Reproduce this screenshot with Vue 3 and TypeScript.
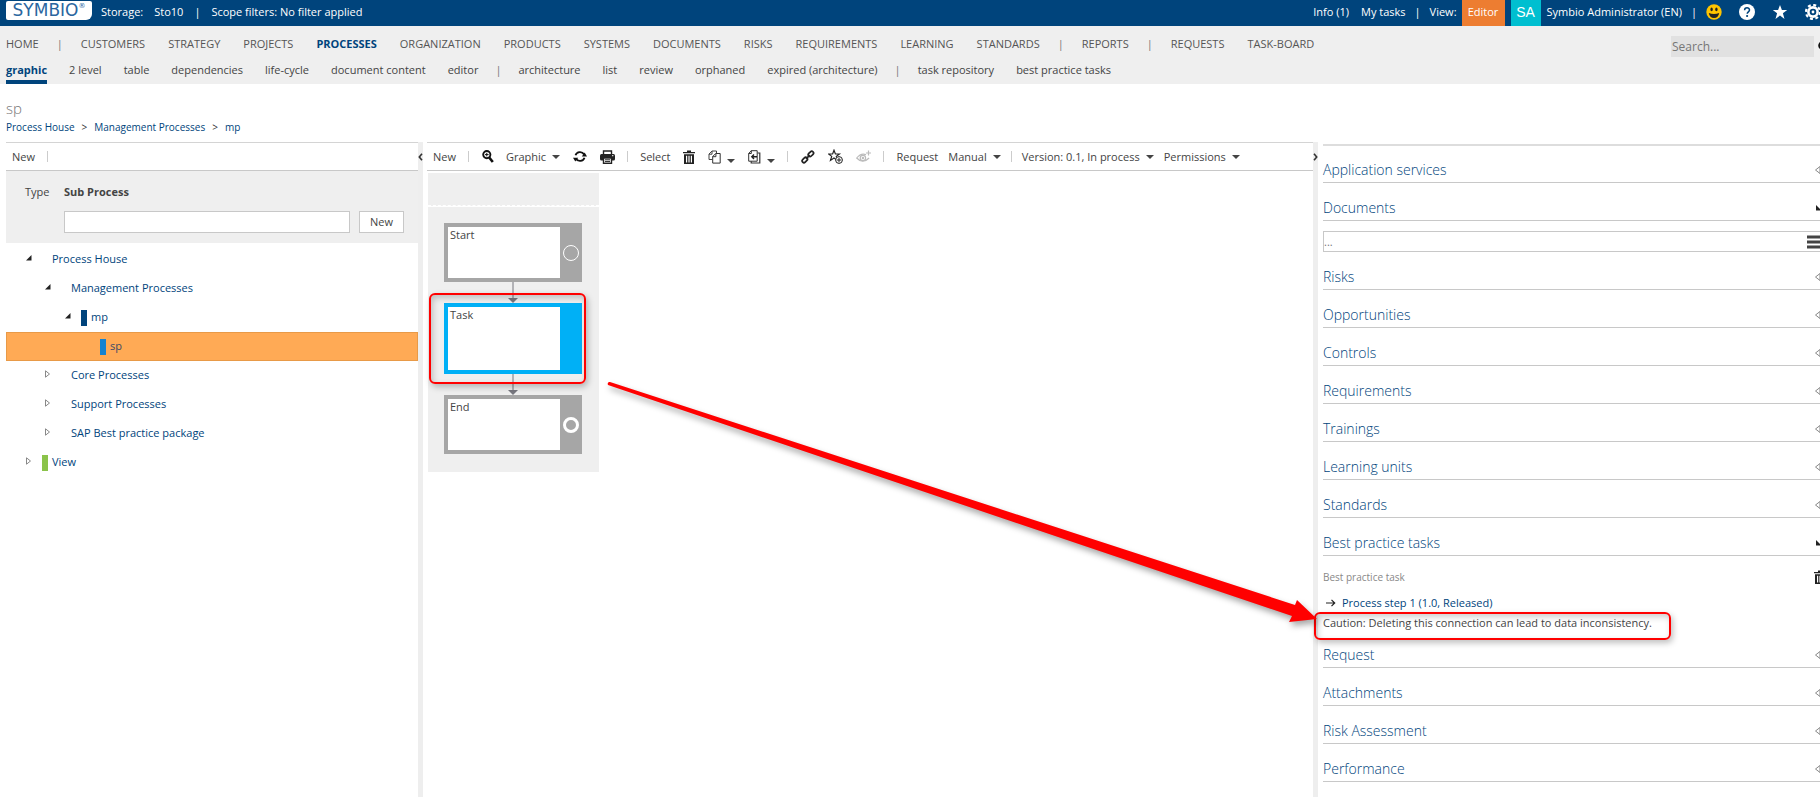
<script setup lang="ts">
import { ref } from 'vue'

interface NavItem { label: string; active?: boolean; divider?: boolean }
interface TreeItem { label: string; level: number; state: 'open' | 'closed' | 'leaf'; color?: string; selected?: boolean }
interface FlowNode { label: string; kind: 'start' | 'task' | 'end' }
interface Section { label: string; open?: 'documents' | 'tasks' }

const divider: NavItem = { label: '|', divider: true }
const names = (...labels: string[]): NavItem[] => labels.map((label) => ({ label }))

const mainNav: NavItem[] = [
  ...names('HOME'), divider,
  ...names('CUSTOMERS', 'STRATEGY', 'PROJECTS'),
  { label: 'PROCESSES', active: true },
  ...names('ORGANIZATION', 'PRODUCTS', 'SYSTEMS', 'DOCUMENTS', 'RISKS', 'REQUIREMENTS', 'LEARNING', 'STANDARDS'), divider,
  ...names('REPORTS'), divider,
  ...names('REQUESTS', 'TASK-BOARD'),
]
const subNav: NavItem[] = [
  { label: 'graphic', active: true },
  ...names('2 level', 'table', 'dependencies', 'life-cycle', 'document content', 'editor'), divider,
  ...names('architecture', 'list', 'review', 'orphaned', 'expired (architecture)'), divider,
  ...names('task repository', 'best practice tasks'),
]
const tree: TreeItem[] = [
  { label: 'Process House', level: 0, state: 'open' },
  { label: 'Management Processes', level: 1, state: 'open' },
  { label: 'mp', level: 2, state: 'open', color: 'navy' },
  { label: 'sp', level: 3, state: 'leaf', color: 'blue', selected: true },
  { label: 'Core Processes', level: 1, state: 'closed' },
  { label: 'Support Processes', level: 1, state: 'closed' },
  { label: 'SAP Best practice package', level: 1, state: 'closed' },
  { label: 'View', level: 0, state: 'closed', color: 'green' },
]
const nodes: FlowNode[] = [
  { label: 'Start', kind: 'start' },
  { label: 'Task', kind: 'task' },
  { label: 'End', kind: 'end' },
]
const sections: Section[] = [
  { label: 'Application services' },
  { label: 'Documents', open: 'documents' },
  { label: 'Risks' }, { label: 'Opportunities' }, { label: 'Controls' }, { label: 'Requirements' },
  { label: 'Trainings' }, { label: 'Learning units' }, { label: 'Standards' },
  { label: 'Best practice tasks', open: 'tasks' },
  { label: 'Request' }, { label: 'Attachments' }, { label: 'Risk Assessment' }, { label: 'Performance' },
]
const search = ref('')
const newName = ref('')
const documentName = ref('')
</script>

<template>
  <div class="app">
    <header class="topbar">
      <a href="#" class="logo">SYMBIO<sup>®</sup></a>
      <div class="context">
        <span>Storage:</span><a href="#">Sto10</a><span>|</span><a href="#">Scope filters: No filter applied</a>
      </div>
      <div class="account">
        <a href="#">Info (1)</a><a href="#">My tasks</a><span class="sep">|</span>
        <span class="view">View:<button type="button" class="editor">Editor</button></span>
        <span class="avatar">SA</span>
        <a href="#" class="user">Symbio Administrator (EN)</a><span class="sep">|</span>
        <span class="top-icons">
          <button type="button" aria-label="Feedback">
            <svg width="16" height="16" viewBox="0 0 16 16"><circle cx="8" cy="8" r="7.7" fill="#ffc400" /><ellipse cx="5.6" cy="5.4" rx="1.2" ry="1.8" fill="#222" /><ellipse cx="10.4" cy="5.4" rx="1.2" ry="1.8" fill="#222" /><path d="M2.8 9q5.200 2 10.400 0-.8 5-5.200 5T2.800 9z" fill="#222" /></svg>
          </button>
          <button type="button" aria-label="Help">
            <svg width="16" height="16" viewBox="0 0 16 16"><circle cx="8" cy="8" r="8" fill="#fff" /><path d="M5.600 6.200c0-3.300 4.900-3.200 4.900-.2 0 1.800-2.300 1.900-2.300 3.800" fill="none" stroke="#00447c" stroke-width="1.500" /><circle cx="8.100" cy="12" r="1.100" fill="#00447c" /></svg>
          </button>
          <button type="button" aria-label="Favourites">
            <svg width="16" height="16" viewBox="0 0 16 16"><path d="M8 1l1.900 5H15.200l-4.300 3.300L12.500 15 8 11.600 3.500 15l1.600-5.700L.8 6h5.300z" fill="#fff" /></svg>
          </button>
          <button type="button" aria-label="Settings">
            <svg width="16" height="16" viewBox="0 0 16 16"><circle cx="8" cy="8" r="7" fill="none" stroke="#fff" stroke-width="2.200" stroke-dasharray="3 2.500" /><circle cx="8" cy="8" r="4.600" fill="none" stroke="#fff" stroke-width="2.600" /><circle cx="8" cy="8" r="1.400" fill="#fff" /></svg>
          </button>
        </span>
      </div>
    </header>

    <div class="navarea">
      <div class="navs">
        <nav class="mainnav" aria-label="Facets">
          <template v-for="(item, i) in mainNav" :key="i">
            <span v-if="item.divider" class="divider">|</span>
            <a v-else href="#" :class="{ active: item.active }">{{ item.label }}</a>
          </template>
        </nav>
        <nav class="subnav" aria-label="Views">
          <template v-for="(item, i) in subNav" :key="i">
            <span v-if="item.divider" class="divider">|</span>
            <a v-else href="#" :class="{ active: item.active }">{{ item.label }}</a>
          </template>
        </nav>
      </div>
      <form class="search" @submit.prevent>
        <input v-model="search" type="text" placeholder="Search..." aria-label="Search">
        <button type="submit" aria-label="Run search">
          <svg width="12" height="12" viewBox="0 0 12 12"><circle cx="4.500" cy="4.500" r="3.300" fill="none" stroke="#111" stroke-width="2" /><path d="M7 7l4 4" stroke="#111" stroke-width="2.500" /></svg>
        </button>
      </form>
    </div>

    <div class="heading">
      <h1>sp</h1>
      <nav class="crumbs" aria-label="Breadcrumb">
        <a href="#">Process House</a><span>&gt;</span><a href="#">Management Processes</a><span>&gt;</span><a href="#">mp</a>
      </nav>
    </div>

    <main class="workspace">
      <aside class="left">
        <div class="toolbar"><button type="button">New</button><span class="bar"></span></div>
        <form class="create" @submit.prevent>
          <label for="new-name">Type</label>
          <strong>Sub Process</strong>
          <input id="new-name" v-model="newName" type="text">
          <button type="submit">New</button>
        </form>
        <ul class="tree">
          <li v-for="item in tree" :key="item.label" :class="['level-' + item.level, { selected: item.selected }]">
            <svg v-if="item.state === 'open'" class="toggle" width="8" height="8" viewBox="0 0 8 8"><path d="M6.500 1v5.500H1z" fill="#222" /></svg>
            <svg v-else-if="item.state === 'closed'" class="toggle" width="8" height="8" viewBox="0 0 8 8"><path d="M1.500 .8l4 3.200-4 3.200z" fill="#fff" stroke="#888" /></svg>
            <span v-else class="toggle"></span>
            <span class="chip" :class="item.color"></span>
            <a href="#">{{ item.label }}</a>
          </li>
        </ul>
      </aside>

      <div class="splitter">
        <button type="button" aria-label="Collapse tree"><svg width="5" height="8" viewBox="0 0 5 8"><path d="M4 .8L1.300 4 4 7.200" fill="none" stroke="#333" stroke-width="1.600" /></svg></button>
      </div>

      <section class="center">
        <div class="toolbar tools">
          <button type="button">New</button><span class="bar"></span>
          <button type="button" class="tool" aria-label="Zoom">
            <svg width="12" height="13" viewBox="0 0 12 13"><circle cx="4.800" cy="4.600" r="3.600" fill="#fff" stroke="#111" stroke-width="1.900" /><path d="M4.800 2.800v3.600M3 4.600h3.600" stroke="#111" /><path d="M7.200 7.500l3.600 4.500" stroke="#111" stroke-width="2.600" /></svg>
          </button>
          <button type="button">Graphic<i class="caret"></i></button>
          <button type="button" class="tool" aria-label="Refresh">
            <svg width="14" height="13" viewBox="0 0 14 13"><path d="M2.500 5.300a4.700 4.700 0 0 1 8.600-.8M11.500 7.700a4.700 4.700 0 0 1-8.600.8" fill="none" stroke="#111" stroke-width="1.800" /><path d="M8.800 5.800H14L11.700 2zM5.200 7.200H0L2.300 11z" fill="#111" transform="translate(0 .6)" /></svg>
          </button>
          <button type="button" class="tool" aria-label="Print">
            <svg width="15" height="14" viewBox="0 0 15 14"><path d="M3.500 4V1h8v3" fill="#fff" stroke="#222" stroke-width="1.400" /><rect y="4" width="15" height="6.500" rx="1.500" fill="#222" /><rect x="3.500" y="8" width="8" height="5.300" fill="#fff" stroke="#222" stroke-width="1.400" /><path d="M5 9.800h5M5 11.600h5" stroke="#222" /><path d="M12 5.700h1.400" stroke="#fff" /></svg>
          </button>
          <span class="bar"></span>
          <button type="button">Select</button>
          <button type="button" class="tool" aria-label="Delete">
            <svg width="12" height="14" viewBox="0 0 12 14"><path d="M0 3.200V2h4V.5h4V2h4v1.200zM1 4.200h10V14H1zM3 5.700v6.800h1.200V5.700zm2.400 0v6.800h1.200V5.700zm2.400 0v6.800H9V5.700z" fill="#222" fill-rule="evenodd" /></svg>
          </button>
          <button type="button" class="tool" aria-label="Copy">
            <svg width="13" height="14" viewBox="0 0 13 14"><path d="M4.500 9.500H1V4l3-3h4.500v2M1 4.200h3V1" fill="none" stroke="#444" /><path d="M4.700 6.500l3-3h4.500v9.600H4.700zM4.700 6.700h3.200V3.500" fill="#fff" stroke="#333" /></svg><i class="caret low"></i>
          </button>
          <button type="button" class="tool" aria-label="Paste">
            <svg width="13" height="14" viewBox="0 0 13 14"><path d="M.7 3.500l2.500-2.800h6v10.500H.7zM.7 3.500h2.600V.7" fill="#fff" stroke="#333" /><path d="M9.500 3h2.300v10H3.200v-1.700" fill="none" stroke="#333" stroke-width="1.200" /><path d="M9 6.800H4M6 4.600L3.800 6.800 6 9" fill="none" stroke="#222" stroke-width="1.400" /></svg><i class="caret low"></i>
          </button>
          <span class="bar"></span>
          <button type="button" class="tool" aria-label="Link">
            <svg width="14" height="14" viewBox="0 0 14 14"><g fill="none" stroke="#222" stroke-width="1.700"><rect x="-3" y="-1.800" width="6" height="3.600" rx="1.800" transform="translate(3.800 10) rotate(-45)" /><rect x="-3" y="-1.800" width="6" height="3.600" rx="1.800" transform="translate(9.900 3.900) rotate(-45)" /><path d="M5 8.800l3.800-3.700" /></g></svg>
          </button>
          <button type="button" class="tool" aria-label="Add favourite">
            <svg width="15" height="15" viewBox="0 0 15 15"><path d="M6 1.200l1.400 3.800h4L8.300 7.400l1.100 4L6 9l-3.500 2.400 1.200-4L.6 5h4z" fill="#fff" stroke="#222" stroke-width="1.200" /><circle cx="11" cy="11" r="3.400" fill="#fff" stroke="#222" /><path d="M11 8.800v4.400M8.800 11h4.400" stroke="#222" /></svg>
          </button>
          <button type="button" class="tool" aria-label="Watch" disabled>
            <svg width="15" height="14" viewBox="0 0 15 14"><g fill="none" stroke="#bbb" stroke-width="1.200"><path d="M10 4.600Q5 2.500.7 8q6 6.500 12.400 0" /><circle cx="6.900" cy="8" r="2.700" /><path d="M12.500.5v5M10 3h5" /></g><circle cx="6.900" cy="8" r="1.200" fill="#bbb" /></svg>
          </button>
          <span class="bar"></span>
          <div class="menus">
            <button type="button">Request</button>
            <button type="button">Manual<i class="caret"></i></button>
            <span class="bar"></span>
            <button type="button">Version: 0.1, In process<i class="caret"></i></button>
            <button type="button">Permissions<i class="caret"></i></button>
          </div>
        </div>
        <div class="lane">
          <div class="lane-head"></div>
          <div class="lane-body">
            <template v-for="(node, i) in nodes" :key="node.label">
              <svg v-if="i > 0" class="link" width="10" height="21" viewBox="0 0 10 21"><path d="M5 0v17" stroke="#77777f" /><path d="M0 16h10l-5 5z" fill="#77777f" /></svg>
              <div class="node" :class="node.kind">
                <div class="label">{{ node.label }}</div>
                <span v-if="node.kind !== 'task'" class="event"></span>
                <span v-else class="mark"></span>
              </div>
            </template>
          </div>
        </div>
      </section>

      <div class="splitter">
        <button type="button" aria-label="Collapse details"><svg width="5" height="8" viewBox="0 0 5 8"><path d="M1 .8L3.700 4 1 7.200" fill="none" stroke="#333" stroke-width="1.600" /></svg></button>
      </div>

      <aside class="details">
        <section v-for="section in sections" :key="section.label">
          <h2>
            <a href="#">{{ section.label }}</a>
            <svg v-if="section.open" width="12" height="8" viewBox="0 0 12 8"><path d="M2 1v5.500h5.500z" fill="#222" /></svg>
            <svg v-else width="12" height="8" viewBox="0 0 12 8"><path d="M6 .5L1.500 4 6 7.500z" fill="#fff" stroke="#888" /></svg>
          </h2>
          <div v-if="section.open === 'documents'" class="picker">
            <input v-model="documentName" type="text" placeholder="..." aria-label="Document">
            <button type="button" aria-label="Choose document"><svg width="18" height="14" viewBox="0 0 18 14"><path d="M0 2h18M0 7h18M0 12h18" stroke="#444" stroke-width="3" /></svg></button>
          </div>
          <div v-if="section.open === 'tasks'" class="connection">
            <div class="caption">
              <span>Best practice task</span>
              <button type="button" aria-label="Delete connection"><svg width="12" height="14" viewBox="0 0 12 14"><path d="M0 3.200V2h4V.5h4V2h4v1.200zM1 4.200h10V14H1zM3 5.700v6.800h1.200V5.700zm2.400 0v6.800h1.200V5.700zm2.400 0v6.800H9V5.700z" fill="#222" fill-rule="evenodd" /></svg></button>
            </div>
            <a href="#" class="step"><svg width="10" height="8" viewBox="0 0 10 8"><path d="M0 4h8.500M5.500 .8L8.700 4 5.500 7.200" fill="none" stroke="#222" stroke-width="1.200" /></svg>Process step 1 (1.0, Released)</a>
            <p>Caution: Deleting this connection can lead to data inconsistency.<span class="mark"></span></p>
          </div>
        </section>
      </aside>

      <svg class="pointer" width="720" height="260" viewBox="0 0 720 260"><path d="M2 0Q0 1 1 3L685 234 682 240 710 237 690 218 688 223 3 0z" fill="#f00" /></svg>
    </main>
  </div>
</template>

<style>
body { margin: 0; background: #fff; }
</style>

<style scoped>
.app { min-height: 100vh; display: flex; flex-direction: column; overflow: hidden; font: 11px/16px "Open Sans", "Noto Sans", sans-serif; color: #444; }
* { box-sizing: border-box; }
a { color: inherit; text-decoration: none; white-space: nowrap; }
button { font: inherit; color: inherit; background: none; border: 0; padding: 0; margin: 0; white-space: nowrap; }
input { font: inherit; color: #444; border-radius: 0; min-width: 0; }
svg { display: block; flex: none; }

.topbar { height: 26px; display: flex; align-items: flex-start; background: #00447c; color: #fff; padding-left: 6px; white-space: nowrap; }
.logo { display: flex; justify-content: center; height: 19px; margin-top: 1px; width: 86px; background: #fff; border-radius: 2px 2px 6px 2px; color: #2a66a0; font: 17px/19px "DejaVu Sans", sans-serif; }
.logo sup { font-size: 7px; line-height: 10px; }
.context, .account { display: flex; align-items: center; height: 24px; }
.context { gap: 11px; margin-left: 9px; }
.account { gap: 12px; margin-left: auto; }
.sep { margin: 0 -3px; }
.view, .editor, .avatar { display: flex; align-items: center; height: 26px; margin-top: 2px; }
.view { gap: 5px; padding-bottom: 2px; }
.view .editor { width: 43px; justify-content: center; background: #ed7d31; padding-bottom: 2px; }
.avatar { width: 30px; justify-content: center; background: #00bfd0; font: 14px/20px "Liberation Sans", sans-serif; margin-left: -6px; padding-bottom: 2px; }
.user { margin-left: -6px; }
.top-icons { display: flex; gap: 17px; margin-right: -1px; }

.navarea { height: 58px; display: flex; justify-content: space-between; align-items: flex-start; background: #efefef; color: #555; }
.navs { padding: 10px 0 0 6px; }
.mainnav, .subnav { display: flex; white-space: nowrap; }
.mainnav { gap: 23px; height: 16px; }
.subnav { gap: 22px; height: 32px; padding-top: 8px; line-height: 20px; color: #444; }
.divider { margin: 0 -5px; color: #777; }
.active { color: #00447c; font-weight: 700; }
.subnav .active { border-bottom: 4px solid #00447c; }
.search { display: flex; align-items: center; gap: 4px; margin: 10px -10px 0 0; }
.search input { width: 143px; height: 21px; background: #e1e1e1; border: 0; padding: 0 1px; font-size: 12px; }
.search input::placeholder, .picker input::placeholder { color: #767676; opacity: 1; }

.heading { padding: 14px 6px 7px; }
h1 { margin: 0; font-size: 15px; line-height: 21px; font-weight: 300; color: #777; }
.crumbs { display: flex; gap: 7px; color: #333; font-size: 10px; }
.crumbs a, .tree a { color: #00447c; }

.workspace { flex: 1; position: relative; display: grid; grid-template-columns: 412fr 5px 4px 886fr 5px 5px 497fr; padding-left: 6px; }
.left { grid-column: 1; min-width: 0; }
.center { grid-column: 4; min-width: 0; }
.details { grid-column: 7; min-width: 0; margin-right: -6px; padding-top: 2px; }
.splitter { background: #eee; padding-top: 11px; }
.splitter button { display: block; }

.toolbar { display: flex; align-items: center; height: 29px; border-top: 1px solid #d4d4d4; border-bottom: 1px solid #c8c8c8; padding-left: 6px; gap: 12px; }
.toolbar button { display: flex; align-items: center; gap: 6px; }
.toolbar .tool { margin-left: 1px; }
.menus { display: flex; align-items: center; gap: 10px; }
.bar { width: 1px; height: 11px; background: #ccc; flex: none; }
.caret { border: 4px solid transparent; border-top-color: #444; border-bottom: 0; }
.low { margin-top: 8px; }

.create { display: grid; grid-template-columns: 39px 1fr 45px; gap: 11px 0; height: 72px; padding: 13px 14px 0 19px; background: #efefef; align-items: start; align-content: start; }
.create strong { grid-column: 2 / 4; font-weight: 700; }
.create input { grid-column: 2; height: 22px; border: 1px solid #c8c8c8; background: #fff; margin-right: 9px; }
.create button { height: 22px; border: 1px solid #c8c8c8; background: #fff; }

.tree { list-style: none; margin: 0; padding: 2px 0 0; }
.tree li { display: flex; align-items: center; height: 29px; border: 1px solid transparent; }
.tree a { padding-bottom: 2px; }
.toggle { width: 8px; height: 8px; margin: -4px 9px 0 0; flex: none; }
.level-0 { padding-left: 18px; }
.level-1 { padding-left: 37px; }
.level-2 { padding-left: 57px; }
.level-3 { padding-left: 76px; }
.chip { width: 6px; height: 16px; margin-right: 4px; flex: none; }
.navy { background: #00447c; }
.blue { background: #1683d0; }
.green { background: #8bc34a; }
.tree .selected { background: #ffaa55; border-color: #e89a48; }
.tree .selected a { color: #3c4a66; }

.lane { width: 171px; margin: 2px 0 0 1px; }
.lane-head { height: 33px; background: #efefef; border-bottom: 1px dashed #fff; }
.lane-body { height: 265px; margin-top: 1px; padding: 16px 17px 0 16px; background: #efefef; }
.link { margin-left: 64px; }
.node { position: relative; height: 59px; padding: 4px 22px 4px 4px; background: #a6a6a6; }
.label { height: 100%; background: #fff; padding: 0 2px; }
.task { height: 71px; background: #00b0f6; }
.event { position: absolute; right: 3px; top: 22px; width: 16px; height: 16px; border: 1px solid #fff; border-radius: 50%; }
.end .event { border-width: 3px; }
.mark { position: absolute; border: 2px solid #f00; border-radius: 6px; box-shadow: 2px 3px 6px rgba(0, 0, 0, .25), inset 2px 3px 6px rgba(0, 0, 0, .2); }
.node .mark { inset: -10px -4px -10px -15px; }

h2 { display: flex; align-items: center; justify-content: space-between; height: 38px; margin: 0; padding-top: 12px; border-bottom: 1px solid #c8c8c8; font-size: 14px; line-height: 24px; font-weight: 300; color: #00447c; }
.details section:first-child h2 { height: 39px; border-top: 2px solid #ddd; }
.picker { display: flex; align-items: center; height: 21px; margin: 10px 0 0; border: 1px solid #c8c8c8; }
.picker input { flex: 1; height: 19px; border: 0; padding: 0; background: none; }
.connection { padding-top: 12px; }
.caption { display: flex; justify-content: space-between; align-items: center; color: #888; font-size: 10px; height: 18px; }
.step { display: flex; align-items: center; gap: 6px; margin: 9px 0 4px 3px; color: #00447c; }
.connection p { position: relative; margin: 0; height: 15px; width: 342px; white-space: nowrap; }
.connection .mark { inset: -3px -6px -10px -9px; }
.pointer { position: absolute; left: 607px; top: 240px; filter: drop-shadow(2px 4px 3px rgba(0, 0, 0, .35)); pointer-events: none; }
</style>
